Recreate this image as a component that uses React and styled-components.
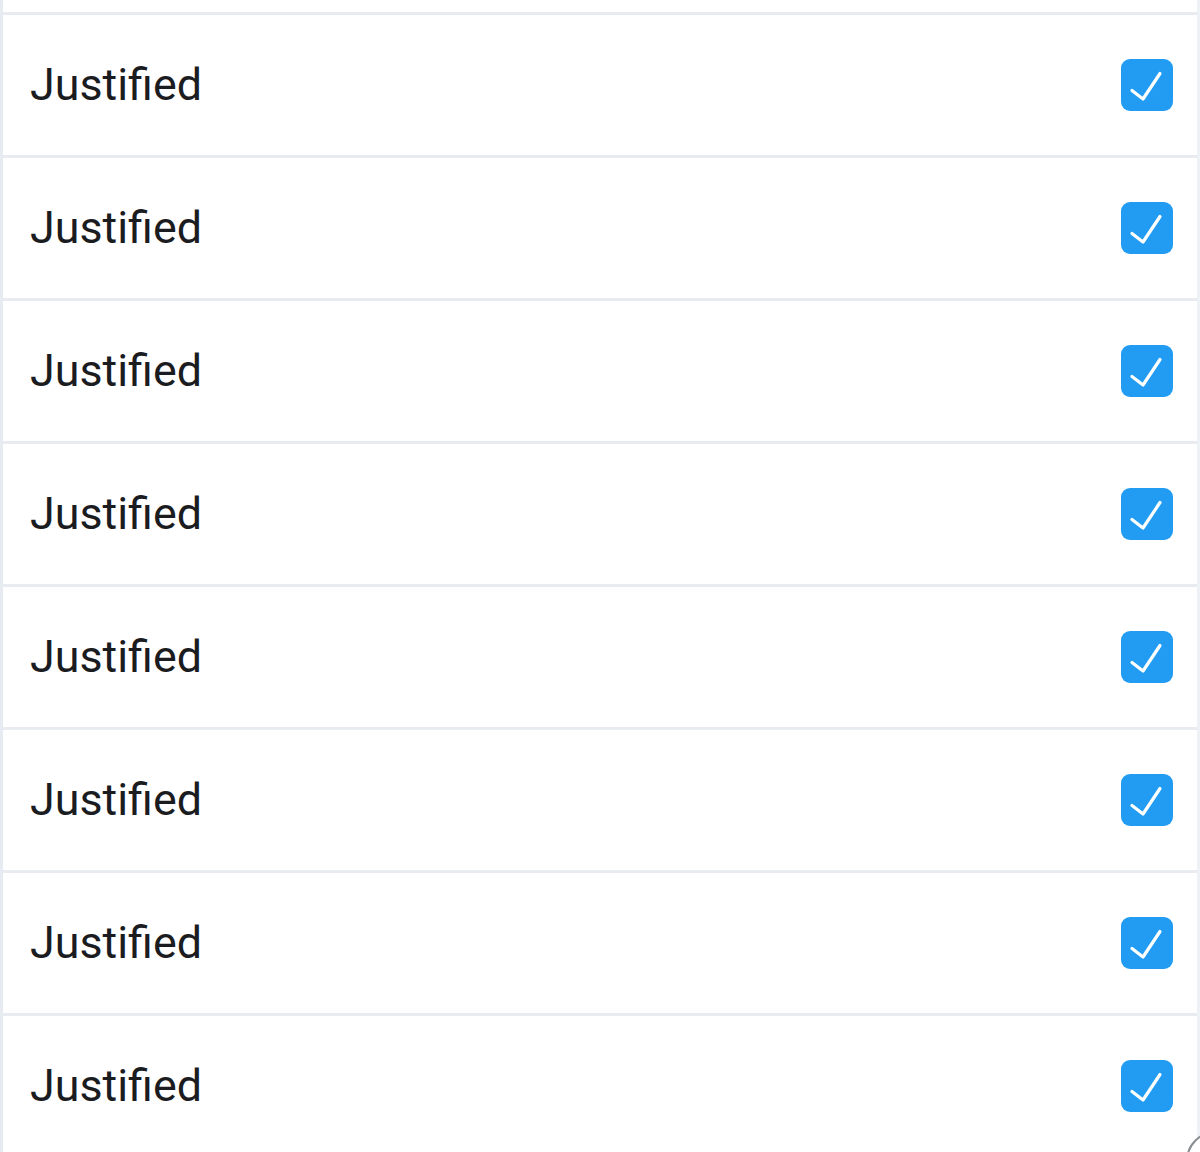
import React from "react";
import styled, { createGlobalStyle } from "styled-components";

const GlobalStyle = createGlobalStyle`
  html, body {
    margin: 0;
    padding: 0;
    background: #ffffff;
    overflow: hidden;
  }
`;

const Page = styled.div`
  position: relative;
  width: 1200px;
  height: 1152px;
  box-sizing: border-box;
  border-left: 3px solid #e6ebf1;
  border-right: 3px solid #eef1f5;
  padding-top: 12px;
  font-family: Roboto, "Noto Sans", sans-serif;
`;

const Row = styled.label`
  display: flex;
  align-items: center;
  justify-content: space-between;
  height: 140px;
  padding: 0 24px 0 27px;
  border-top: 3px solid #e8ecf1;
  background: #ffffff;
`;

const Label = styled.span`
  font-size: 44.8px;
  color: #1b1c1f;
  margin-top: -1px;
`;

const Box = styled.span`
  display: flex;
  align-items: center;
  justify-content: center;
  width: 52px;
  height: 52px;
  border-radius: 9px;
  background: ${props => (props.checked ? "#219cf2" : "#ffffff")};
  border: ${props => (props.checked ? "none" : "2px solid #c4ccd6")};
  box-sizing: border-box;
`;

const Corner = styled.div`
  position: absolute;
  left: 1183px;
  top: 1131px;
  width: 60px;
  height: 60px;
  border-radius: 50%;
  border: 2px solid #8a8d91;
  background: #ffffff;
  box-sizing: border-box;
`;

const Check = () => (
  <svg width="52" height="52" viewBox="0 0 52 52">
    <path
      d="M11 31.5 L22 40 L39 14.5"
      fill="none"
      stroke="#ffffff"
      strokeWidth="3.2"
      strokeLinecap="round"
      strokeLinejoin="round"
    />
  </svg>
);

const items = Array.from({ length: 8 }, (_, i) => ({ id: i, text: "Justified", checked: true }));

export default function App() {
  return (
    <>
      <GlobalStyle />
      <Page>
        {items.map(item => (
          <Row key={item.id}>
            <Label>{item.text}</Label>
            <Box checked={item.checked}>{item.checked && <Check />}</Box>
          </Row>
        ))}
        <Corner />
      </Page>
    </>
  );
}
